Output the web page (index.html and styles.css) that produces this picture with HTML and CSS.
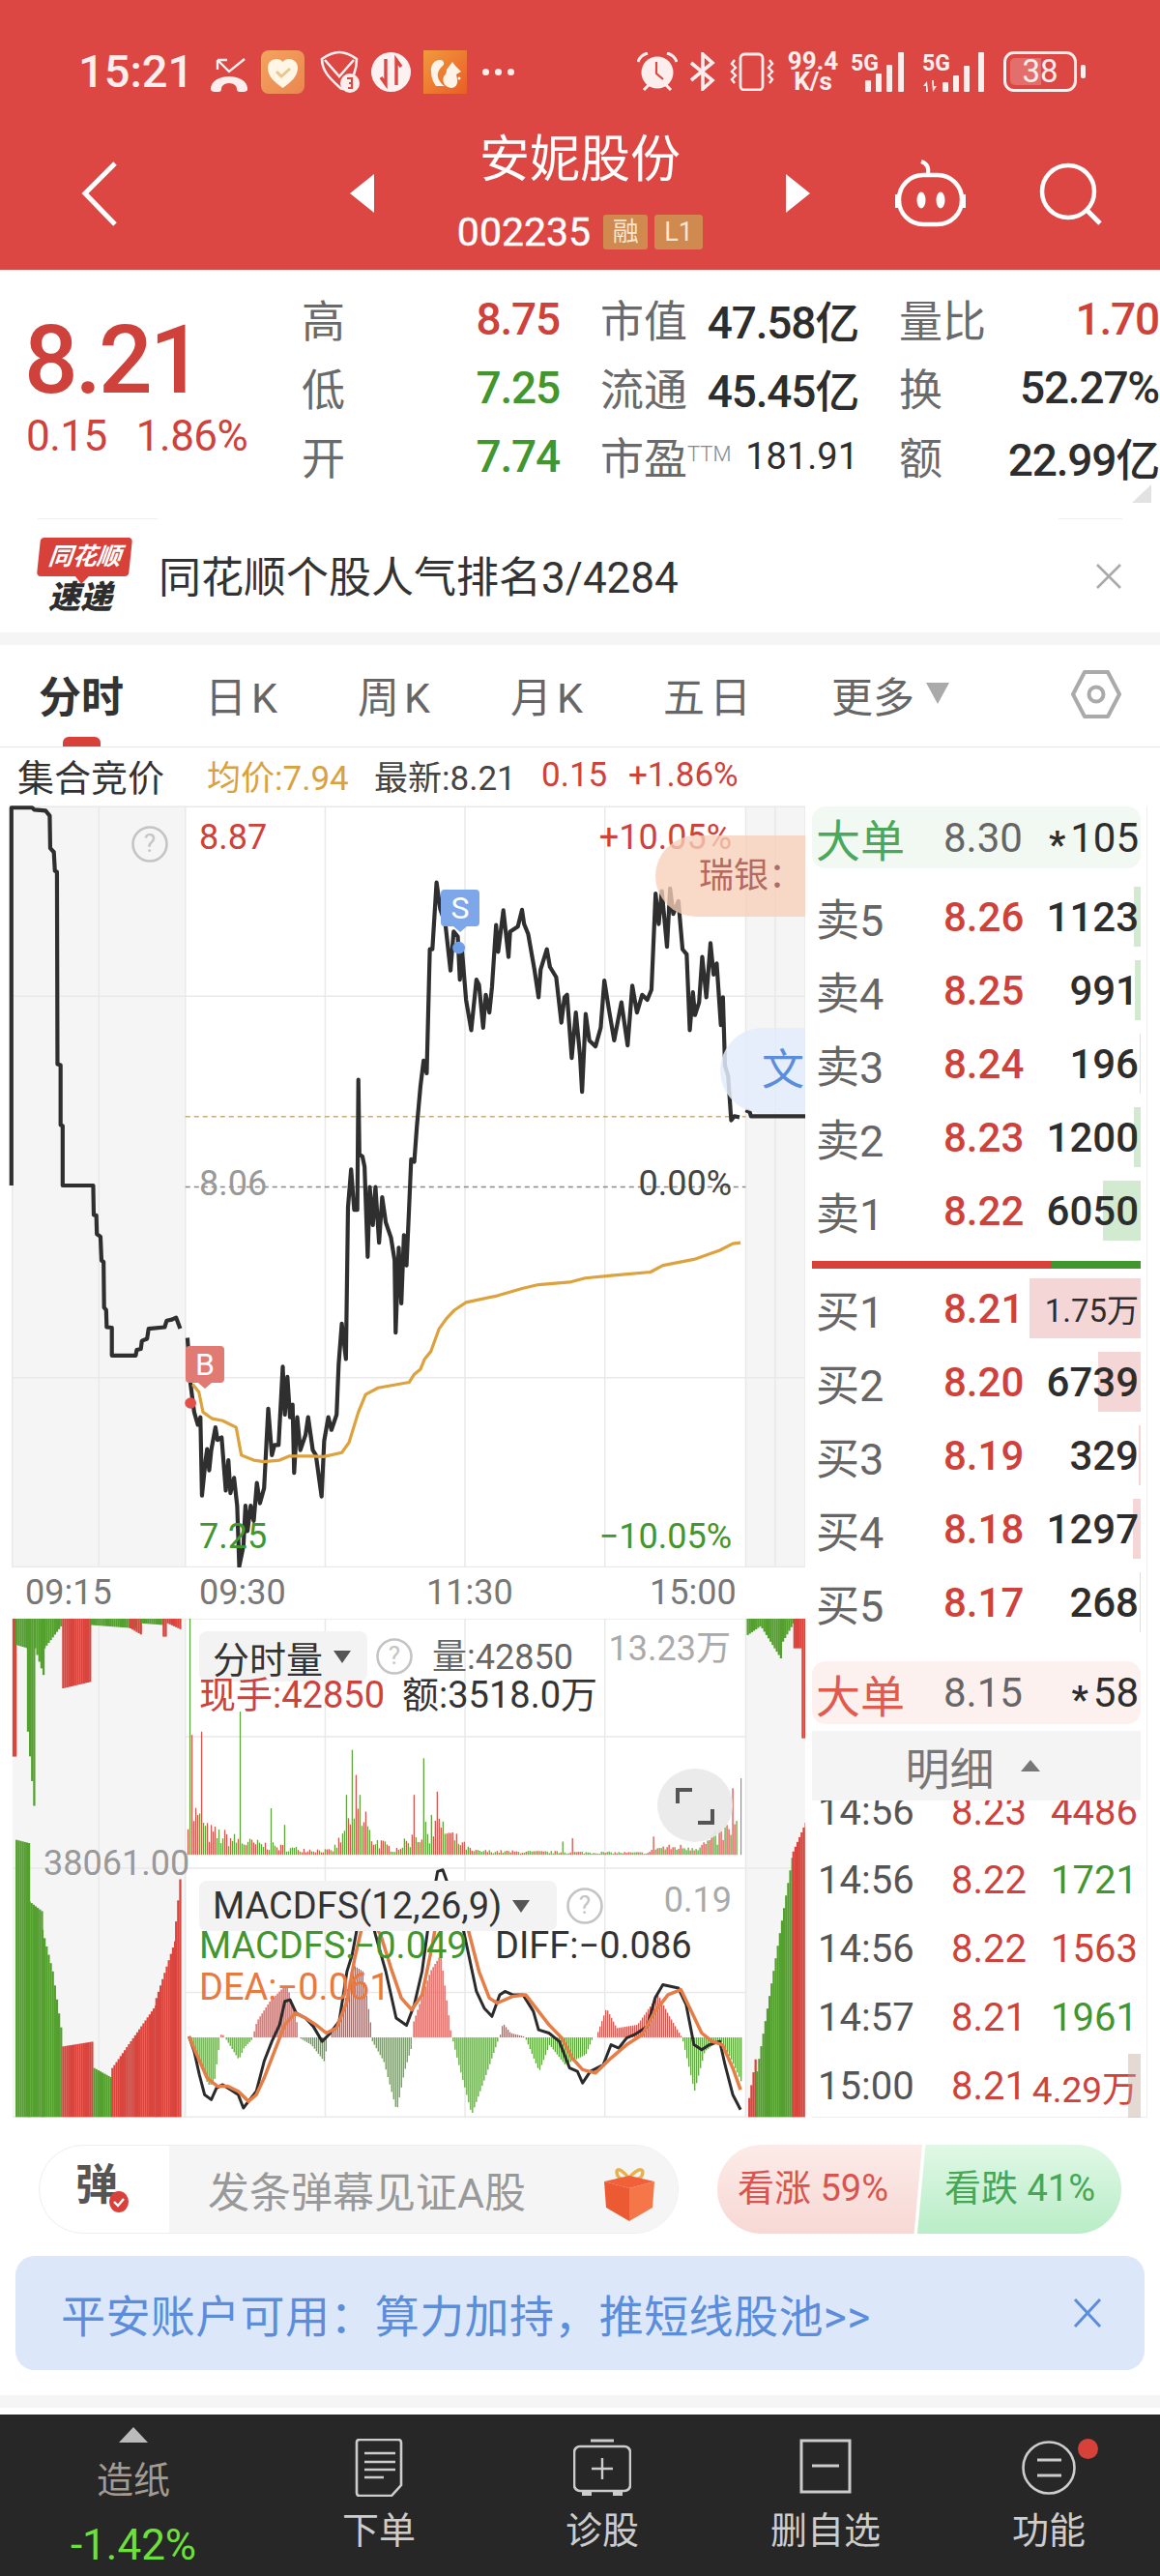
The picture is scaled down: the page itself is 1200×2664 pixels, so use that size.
FILE: index.html
```html
<!DOCTYPE html>
<html lang="zh-CN">
<head>
    <meta charset="UTF-8">
    <meta name="viewport" content="width=device-width, initial-scale=1.0">
    <title>安妮股份</title>
    <link rel="stylesheet" href="styles.css">
</head>
<body>
    <header class="header">
        <div class="status">
            <span class="clock">15:21</span>
            <svg class="st-call" viewBox="0 0 40 40"><path d="M8 5l0 10 M8 5l10 0 M8 5L20 17 36 4" fill="none" stroke="#fdeeee" stroke-width="2.4"/><path d="M1 35c0-8 9-13 19-13s19 5 19 13c0 2-2 3-4 3h-4c-2 0-3-1-3-3 0-3-3-6-8-6s-8 3-8 6c0 2-1 3-3 3H5c-2 0-4-1-4-3z" fill="#fdeeee"/></svg>
            <svg class="st-tile" viewBox="0 0 45 45"><defs><linearGradient id="tileA" x1="0" y1="0" x2="1" y2="1"><stop offset="0" stop-color="#f4a35f"/><stop offset="1" stop-color="#ea8650"/></linearGradient></defs><rect width="45" height="45" rx="8" fill="url(#tileA)"/><path d="M22.500 39C14 33 7 27 7 18c0-6 5-9 9-9 3 0 5 1 6.500 3 1.500-2 3.500-3 6.500-3 4 0 9 3 9 9 0 9-7 15-15.500 21z" fill="#fff6e6"/><path d="M16 22l5 5 9-8" fill="none" stroke="#eac68c" stroke-width="3"/></svg>
            <svg class="st-shield" viewBox="0 0 42 46"><path d="M3 10C10 5 16 3 21 3s11 2 18 7c0 10-3 20-11 29-2 2-5 3-7 0C11 30 3 22 3 10z" fill="none" stroke="#fdeeee" stroke-width="2.600"/><path d="M6 11l15 17L36 11" fill="none" stroke="#fdeeee" stroke-width="2.600"/><circle cx="32" cy="35" r="10" fill="#fdeeee"/><path d="M29 30h5v10h-4 M31 35h3" fill="none" stroke="#dc4743" stroke-width="2.200"/></svg>
            <svg class="st-circle" viewBox="0 0 41 41"><circle cx="20.500" cy="20.500" r="20.500" fill="#fdf1f2"/><path d="M15 7v26l-5-7 M26 34V8l5 7" fill="none" stroke="#dc4743" stroke-width="3.400"/></svg>
            <svg class="st-tile st-uc" viewBox="0 0 45 45"><defs><linearGradient id="tileB" x1="0" y1="0" x2="1" y2="1"><stop offset="0" stop-color="#f19a3e"/><stop offset="1" stop-color="#e95d26"/></linearGradient></defs><rect width="45" height="45" fill="url(#tileB)"/><path d="M8 22c-1-7 4-13 10-12 4 1 4 5 1 7-4 4-6 9-2 15 2 3 3 4 5 5H13c-3-4-5-9-5-15z" fill="#fdf3e6"/><path d="M24 20l6-8 3 4 6 6-5 3 1 5c1 5-2 9-6 9-7-1-10-6-8-12 2-2 3-4 3-7z" fill="#fdf3e6"/><circle cx="37" cy="29" r="1.500" fill="#fdf3e6"/></svg>
            <span class="st-more"><i></i><i></i><i></i></span>
            <span class="status-gap"></span>
            <svg class="st-alarm" viewBox="0 0 42 40"><circle cx="21" cy="21" r="16.500" fill="#fdeeee"/><path d="M1 10C3 4 7 2 11 1 M41 10C39 4 35 2 31 1" fill="none" stroke="#fdeeee" stroke-width="3"/><path d="M7 39l5-5 M35 39l-5-5" stroke="#fdeeee" stroke-width="3"/><path d="M20 10v12l7 6" fill="none" stroke="#dc4743" stroke-width="2.200"/></svg>
            <svg class="st-bt" viewBox="0 0 28 40"><path d="M2 11l22 18-10 9V2l10 9L2 29" fill="none" stroke="#fdeeee" stroke-width="3.600"/></svg>
            <svg class="st-vib" viewBox="0 0 46 40"><rect x="11" y="2" width="23" height="37" rx="4" fill="none" stroke="#fdeeee" stroke-width="2.800"/><path d="M5 8l-3 4 4 4-4 4 4 4-4 4 3 4 M41 8l3 4-4 4 4 4-4 4 4 4-3 4" fill="none" stroke="#fdeeee" stroke-width="2.400"/></svg>
            <span class="st-speed"><b>99.4</b><b>K/s</b></span>
            <svg class="st-sig" viewBox="0 0 63 41"><text x="0" y="19" class="sig-text">5G</text><rect x="15" y="29" width="6" height="12" rx="1"/><rect x="26" y="22" width="6" height="19" rx="1"/><rect x="37" y="13" width="6" height="28" rx="1"/><rect x="49" y="0" width="6" height="41" rx="1"/></svg>
            <svg class="st-sig st-sig2" viewBox="0 0 68 41"><text x="0" y="19" class="sig-text">5G</text><path d="M5 30l-4 5h3v6h2z M11 41l4-6h-3v-6h-2z"/><rect x="21" y="31" width="6" height="10" rx="1"/><rect x="32" y="24" width="6" height="17" rx="1"/><rect x="43" y="14" width="6" height="27" rx="1"/><rect x="58" y="0" width="6" height="41" rx="1"/></svg>
            <div class="battery"><span class="battery-fill"></span><span class="battery-num">38</span></div>
            <span class="battery-nub"></span>
        </div>
        <nav class="nav">
            <svg class="nav-back" viewBox="0 0 39 69"><path d="M36 3L5 34l31 32" fill="none" stroke="#fff" stroke-width="5"/></svg>
            <span class="tri-left"></span>
            <div class="nav-title">
                <div class="stock-name">安妮股份</div>
                <div class="stock-code">002235<span class="tag">融</span><span class="tag tag-l1">L1</span></div>
            </div>
            <span class="tri-right"></span>
            <svg class="nav-robot" viewBox="0 0 75 70"><path d="M28 2c6 2 8 7 7 13" fill="none" stroke="#fff" stroke-width="4"/><rect x="5" y="16" width="65" height="51" rx="25" fill="none" stroke="#fff" stroke-width="4.500"/><path d="M4 36v14 M71 36v14" stroke="#fff" stroke-width="6"/><ellipse cx="28" cy="42" rx="4.500" ry="8.500" fill="#fff"/><ellipse cx="48" cy="42" rx="4.500" ry="8.500" fill="#fff"/></svg>
            <svg class="nav-search" viewBox="0 0 65 65"><circle cx="30" cy="30" r="27" fill="none" stroke="#fff" stroke-width="4.500"/><path d="M50 50l13 13" stroke="#fff" stroke-width="5"/></svg>
        </nav>
    </header>

    <section class="quote">
        <div class="price-box">
            <div class="price-big">8.21</div>
            <div class="price-sub"><span>0.15</span><span>1.86%</span></div>
        </div>
        <div class="stats">
            <div class="stat"><span class="stat-k">高</span><span class="val up">8.75</span></div>
            <div class="stat"><span class="stat-k">市值</span><span class="val">47.58亿</span></div>
            <div class="stat"><span class="stat-k">量比</span><span class="val up">1.70</span></div>
            <div class="stat"><span class="stat-k">低</span><span class="val down">7.25</span></div>
            <div class="stat"><span class="stat-k">流通</span><span class="val">45.45亿</span></div>
            <div class="stat"><span class="stat-k">换</span><span class="val">52.27%</span></div>
            <div class="stat"><span class="stat-k">开</span><span class="val down">7.74</span></div>
            <div class="stat"><span class="stat-k">市盈<sup class="ttm">TTM</sup></span><span class="val val-sm">181.91</span></div>
            <div class="stat"><span class="stat-k">额</span><span class="val">22.99亿</span></div>
        </div>
        <span class="corner"></span>
    </section>

    <section class="news">
        <div class="news-rule"><span></span><span></span></div>
        <div class="news-row">
            <div class="logo">
                <div class="logo-tag">同花顺</div>
                <div class="logo-sub">速递</div>
            </div>
            <div class="news-text">同花顺个股人气排名3/4284</div>
            <svg class="news-close" viewBox="0 0 28 28"><path d="M2 2l24 24 M26 2L2 26" stroke="#aaa" stroke-width="2.600"/></svg>
        </div>
    </section>

    <div class="band"></div>

    <div class="tabs">
        <span class="tab active">分时</span>
        <span class="tab">日K</span>
        <span class="tab">周K</span>
        <span class="tab">月K</span>
        <span class="tab">五日</span>
        <span class="tab tab-more">更多<i class="tri-more"></i></span>
        <svg class="tab-hex" viewBox="0 0 52 52"><path d="M14 3h24l12 23-12 23H14L2 26z" fill="none" stroke="#aaa" stroke-width="4" stroke-linejoin="round"/><circle cx="26" cy="26" r="7.500" fill="none" stroke="#aaa" stroke-width="4"/></svg>
    </div>

    <div class="subhead">
        <span class="sub-title">集合竞价</span>
        <span class="sub-avg">均价:7.94</span>
        <span class="sub-last">最新:8.21</span>
        <span class="sub-chg">0.15</span>
        <span class="sub-pct">+1.86%</span>
    </div>

    <main class="market">
        <div class="chart-col">
            <div class="plot plot-main">
                <svg class="plot-svg" viewBox="0 0 1568 1512" preserveAspectRatio="none">
                    <rect x="24" y="8" width="334" height="1504" fill="#f5f5f5"/>
                    <rect x="1440" y="8" width="115" height="1504" fill="#f5f5f5"/>
                    <g class="grid">
                        <path d="M24 8H1555 M24 383H1555 M24 1137H1555 M24 1511H1555 M24 8V1512 M1555 8V1512 M191 8V1512 M358 8V1512 M628 8V1512 M898 8V1512 M1168 8V1512 M1440 8V1512 M1497 8V1512"/>
                    </g>
                    <path class="dash dash-tan" d="M358 621H1440"/>
                    <path class="dash" d="M358 760H1440"/>
                    <polyline class="line line-price" points="22,757 22,10 62,10 66,14 88,16 96,26 97,90 104,98 106,135 110,137 111,517 117,519 117,637 121,639 121,757 180,757 181,815 186,816 187,853 194,858 196,905 200,908 201,998 205,1003 206,1037 216,1038 216,1093 262,1093 264,1082 272,1080 274,1064 284,1060 287,1040 318,1037 322,1024 332,1022 340,1018 348,1040"/>
                    <polyline class="line line-price" points="362,1058 368,1150 375,1205 382,1230 387,1215 390,1370 397,1300 400,1278 404,1320 408,1280 416,1235 420,1260 428,1255 436,1360 441,1300 445,1365 452,1335 458,1390 462,1510 470,1470 474,1390 478,1440 484,1390 490,1420 496,1345 502,1385 510,1355 518,1198 525,1290 530,1270 538,1270 546,1115 550,1210 555,1135 560,1215 565,1190 568,1325 574,1215 580,1280 590,1250 595,1215 604,1280 610,1290 614,1320 621,1372 626,1262 634,1215 640,1240 650,1210 654,1110 660,1030 668,1100 672,800 678,725 684,805 690,805 692,548 694,695 700,700 704,720 710,898 714,760 720,835 725,760 732,870 738,780 745,830 755,860 762,905 764,1048 770,880 775,990 780,855 785,915 790,800 794,705 800,710 805,640 812,560 818,510 824,535 830,290 835,290 843,158 850,210 860,240 870,332 876,255 884,265 888,350 892,290 900,390 910,450 920,350 925,360 933,445 938,380 945,415 950,365 958,242 962,295 972,213 982,305 985,255 1000,245 1008,212 1012,240 1020,260 1032,330 1040,385 1044,330 1056,290 1062,325 1074,345 1084,435 1090,385 1095,380 1104,505 1112,415 1120,500 1124,572 1131,418 1138,470 1150,482 1160,445 1167,352 1176,410 1186,470 1200,395 1212,480 1221,362 1230,415 1240,380 1250,390 1258,370 1266,180 1272,240 1278,175 1288,285 1294,170 1300,220 1310,195 1318,290 1326,300 1332,450 1338,375 1342,420 1350,395 1356,305 1364,385 1372,278 1378,340 1384,318 1392,440 1396,385 1400,520 1406,540 1412,628 1418,620 1428,622"/>
                    <polyline class="line line-price" points="1440,608 1448,612 1450,620 1555,620"/>
                    <polyline class="line line-avg" points="372,1150 384,1165 392,1205 410,1218 430,1222 456,1235 466,1290 490,1300 510,1303 540,1300 558,1292 600,1292 625,1293 660,1285 674,1265 692,1205 706,1170 730,1157 790,1146 800,1130 812,1120 820,1100 832,1085 848,1040 862,1020 878,1003 900,988 960,975 1010,960 1040,953 1100,948 1130,940 1180,935 1256,928 1280,915 1340,903 1390,885 1415,872 1430,870"/>
                    <circle cx="368" cy="1187" r="11" fill="#e0514c"/>
                    <circle cx="886" cy="287" r="12" fill="#6f9fe6"/>
                </svg>
                <svg class="q-mark q-main" viewBox="0 0 38 38"><circle cx="19" cy="19" r="17.500" fill="none" stroke="#c4c4c4" stroke-width="2.600"/><text x="19" y="27" class="q-text">?</text></svg>
                <span class="lbl lbl-high up">8.87</span>
                <span class="lbl lbl-rhigh up">+10.05%</span>
                <span class="lbl lbl-mid">8.06</span>
                <span class="lbl lbl-rmid">0.00%</span>
                <span class="lbl lbl-low down">7.25</span>
                <span class="lbl lbl-rlow down">−10.05%</span>
                <span class="flag flag-b">B</span>
                <span class="flag flag-s">S</span>
                <span class="bubble bubble-ubs">瑞银：</span>
                <span class="bubble bubble-wen">文</span>
            </div>
            <div class="axis">
                <span>09:15</span><span>09:30</span><span>11:30</span><span>15:00</span>
            </div>
            <div class="plot plot-lower">
                <svg class="plot-svg" viewBox="0 41 1568 1498" preserveAspectRatio="none">
                    <rect x="24" y="41" width="334" height="1498" fill="#f5f5f5"/>
                    <rect x="1440" y="41" width="115" height="1498" fill="#f5f5f5"/>
                    <g class="grid">
                        <path d="M24 41H1555 M358 395H1440 M24 790H1555 M358 1163H1440 M24 1537H1555 M191 41V1537 M358 41V1537 M628 41V1537 M898 41V1537 M1168 41V1537 M1440 41V1537"/>
                    </g>
                    <g id="auction"></g>
                    <g id="volume"></g>
                    <g id="macd"></g>
                    <polyline class="line line-diff" points="365,1295 375,1340 385,1410 395,1470 408,1485 418,1450 430,1440 445,1455 460,1470 470,1510 480,1490 495,1460 510,1370 525,1310 540,1260 550,1190 560,1185 572,1225 590,1240 605,1265 622,1310 635,1290 655,1250 670,1100 680,1050 692,950 712,910 725,990 745,1100 765,1240 785,1262 800,1200 815,1100 830,930 845,800 855,795 870,860 890,940 905,1050 920,1160 935,1210 950,1235 965,1170 975,1160 990,1170 1010,1170 1030,1220 1040,1275 1060,1285 1080,1310 1100,1390 1115,1400 1125,1435 1140,1400 1165,1380 1180,1320 1195,1330 1210,1300 1225,1290 1250,1265 1265,1180 1280,1140 1295,1145 1310,1150 1325,1200 1340,1320 1355,1335 1370,1320 1390,1310 1400,1380 1415,1470 1430,1515"/>
                    <polyline class="line line-dea" points="365,1295 380,1350 400,1420 420,1445 440,1445 460,1460 480,1490 495,1470 510,1420 530,1340 550,1260 570,1225 590,1240 610,1260 630,1285 650,1270 670,1190 685,1060 700,960 715,940 735,990 755,1090 775,1180 795,1215 815,1170 835,1020 850,880 870,855 890,890 905,980 925,1100 945,1180 960,1195 990,1175 1015,1170 1035,1210 1060,1260 1085,1300 1105,1360 1125,1395 1150,1405 1180,1360 1210,1320 1240,1290 1265,1220 1290,1170 1315,1155 1335,1220 1355,1285 1375,1310 1395,1320 1415,1390 1430,1455"/>
                </svg>
                <span class="lbl lbl-auction">38061.00</span>
                <span class="pill pill-vol">分时量<i class="tri-down"></i></span>
                <svg class="q-mark q-vol" viewBox="0 0 38 38"><circle cx="19" cy="19" r="17.500" fill="none" stroke="#c4c4c4" stroke-width="2.600"/><text x="19" y="27" class="q-text">?</text></svg>
                <span class="lbl lbl-volnow">量:42850</span>
                <span class="lbl lbl-volmax">13.23万</span>
                <span class="lbl lbl-hand up">现手:42850</span>
                <span class="lbl lbl-amount">额:3518.0万</span>
                <span class="expand"><svg viewBox="0 0 40 40"><path d="M2 17V3h15 M38 23v14H23" fill="none" stroke="#555" stroke-width="4"/></svg></span>
                <span class="pill pill-macd">MACDFS(12,26,9)<i class="tri-down"></i></span>
                <svg class="q-mark q-macd" viewBox="0 0 38 38"><circle cx="19" cy="19" r="17.500" fill="none" stroke="#c4c4c4" stroke-width="2.600"/><text x="19" y="27" class="q-text">?</text></svg>
                <span class="lbl lbl-macdmax">0.19</span>
                <span class="lbl lbl-macd down">MACDFS:−0.049</span>
                <span class="lbl lbl-diff">DIFF:−0.086</span>
                <span class="lbl lbl-dea">DEA:−0.061</span>
            </div>
        </div>

        <aside class="depth">
            <div class="big-row big-buy"><span class="big-k">大单</span><span class="big-p">8.30</span><span class="big-v"><i>*</i>105</span></div>
            <div class="levels">
                <div class="level"><span class="level-k">卖5</span><span class="level-p">8.26</span><span class="level-v">1123</span><span class="bar bar-sell" style="width:7px"></span></div>
                <div class="level"><span class="level-k">卖4</span><span class="level-p">8.25</span><span class="level-v">991</span><span class="bar bar-sell" style="width:6px"></span></div>
                <div class="level"><span class="level-k">卖3</span><span class="level-p">8.24</span><span class="level-v">196</span><span class="bar bar-sell" style="width:1px"></span></div>
                <div class="level"><span class="level-k">卖2</span><span class="level-p">8.23</span><span class="level-v">1200</span><span class="bar bar-sell" style="width:7px"></span></div>
                <div class="level"><span class="level-k">卖1</span><span class="level-p">8.22</span><span class="level-v">6050</span><span class="bar bar-sell" style="width:39px"></span></div>
            </div>
            <div class="ratio"><span class="ratio-red" style="width:73%"></span><span class="ratio-green"></span></div>
            <div class="levels levels-buy">
                <div class="level"><span class="level-k">买1</span><span class="level-p">8.21</span><span class="level-v level-wan">1.75万</span><span class="bar bar-buy" style="width:115px"></span></div>
                <div class="level"><span class="level-k">买2</span><span class="level-p">8.20</span><span class="level-v">6739</span><span class="bar bar-buy" style="width:44px"></span></div>
                <div class="level"><span class="level-k">买3</span><span class="level-p">8.19</span><span class="level-v">329</span><span class="bar bar-buy" style="width:2px"></span></div>
                <div class="level"><span class="level-k">买4</span><span class="level-p">8.18</span><span class="level-v">1297</span><span class="bar bar-buy" style="width:8px"></span></div>
                <div class="level"><span class="level-k">买5</span><span class="level-p">8.17</span><span class="level-v">268</span><span class="bar bar-buy" style="width:1px"></span></div>
            </div>
            <div class="big-row big-sell"><span class="big-k">大单</span><span class="big-p">8.15</span><span class="big-v"><i>*</i>58</span></div>
            <div class="detail-head">明细<i class="tri-up"></i></div>
            <div class="ticks">
                <div class="tick tick-first"><span class="tick-t">14:56</span><span class="tick-p">8.23</span><span class="tick-v up">4486</span></div>
                <div class="tick"><span class="tick-t">14:56</span><span class="tick-p">8.22</span><span class="tick-v down">1721</span></div>
                <div class="tick"><span class="tick-t">14:56</span><span class="tick-p">8.22</span><span class="tick-v up">1563</span></div>
                <div class="tick"><span class="tick-t">14:57</span><span class="tick-p">8.21</span><span class="tick-v down">1961</span></div>
                <div class="tick"><span class="tick-t">15:00</span><span class="tick-p">8.21</span><span class="tick-v tick-wan up">4.29万</span><span class="tick-bar"></span></div>
            </div>
        </aside>
    </main>

    <div class="actions">
        <div class="danmu">
            <div class="danmu-icon">弹<svg class="danmu-check" viewBox="0 0 20 22"><ellipse cx="10" cy="11" rx="10" ry="11" fill="#d9403a"/><path d="M5 11l4 4 6-7" fill="none" stroke="#fff" stroke-width="2.400"/></svg></div>
            <div class="danmu-input">
                <span>发条弹幕见证A股</span>
                <svg class="gift" viewBox="0 0 54 58"><path d="M26 13C16 1 12 4 15 11c2 4 7 4 12 3 5 1 11 1 13-3 3-7-2-10-13 2" fill="none" stroke="#e9b247" stroke-width="3.500"/><path d="M1 17l26-6 26 6-26 7z" fill="#f2603a"/><path d="M1 17l26 7v34L3 44z" fill="#ec5a33"/><path d="M53 17L27 24v34l24-14z" fill="#f47649"/></svg>
            </div>
        </div>
        <div class="vote">
            <div class="vote-up">看涨 59%</div>
            <div class="vote-down">看跌 41%</div>
        </div>
    </div>

    <div class="banner">
        <span>平安账户可用：算力加持，推短线股池&gt;&gt;</span>
        <svg class="banner-close" viewBox="0 0 30 32"><path d="M2 2l26 28 M28 2L2 30" stroke="#5b8ddb" stroke-width="3"/></svg>
    </div>

    <div class="band band-bottom"></div>

    <footer class="footer">
        <div class="foot-item foot-stock">
            <i class="tri-foot"></i>
            <span class="foot-sector">造纸</span>
            <span class="foot-chg">-1.42%</span>
        </div>
        <div class="foot-item">
            <svg class="foot-icon" viewBox="0 0 60 60"><path d="M10 1h40c2 0 3 1 3 3v44l-10 11H10c-2 0-3-1-3-3V4c0-2 1-3 3-3z" fill="none" stroke="#ccc" stroke-width="2.600"/><path d="M15 15h32 M15 24h32 M15 32h32 M15 40h20" stroke="#ccc" stroke-width="2.600"/></svg>
            <span>下单</span>
        </div>
        <div class="foot-item">
            <svg class="foot-icon" viewBox="0 0 60 60"><path d="M18 2h24" stroke="#ccc" stroke-width="3"/><rect x="1" y="8" width="58" height="46" rx="6" fill="none" stroke="#ccc" stroke-width="2.600"/><path d="M30 20v22 M19 31h22" stroke="#ccc" stroke-width="2.400"/><path d="M9 54h10v5H9z M41 54h10v5H41z" fill="#ccc"/></svg>
            <span>诊股</span>
        </div>
        <div class="foot-item">
            <svg class="foot-icon" viewBox="0 0 60 60"><rect x="5" y="2" width="50" height="53" fill="none" stroke="#ccc" stroke-width="3"/><path d="M16 28h28" stroke="#ccc" stroke-width="3"/></svg>
            <span>删自选</span>
        </div>
        <div class="foot-item foot-fn">
            <svg class="foot-icon" viewBox="0 0 60 60"><circle cx="30" cy="30" r="26.500" fill="none" stroke="#ccc" stroke-width="2.600"/><path d="M18 22h25 M18 38h25" stroke="#ccc" stroke-width="2.800"/></svg>
            <span>功能</span>
            <i class="foot-dot"></i>
        </div>
    </footer>

    <script src="charts.js"></script>
</body>
</html>
```

FILE: styles.css
```css
* {
    box-sizing: border-box;
}
body {
    margin: 0;
    width: 1200px;
    height: 2664px;
    overflow: hidden;
    background-color: #fff;
    font-family: Roboto, "Noto Sans CJK SC", sans-serif;
    color: #333;
}
i {
    font-style: normal;
}
.up { color: #cf413b; }
.down { color: #42962e; }

/* header */
.header {
    height: 279px;
    padding-top: 51px;
    background-color: #dc4743;
    color: #fff;
}
.status {
    display: flex;
    align-items: center;
    height: 46px;
    padding-left: 81px;
}
.clock {
    width: 136px;
    font-size: 47px;
    font-weight: 500;
    color: #fdeeee;
    line-height: 46px;
}
.st-call { width: 40px; height: 40px; margin-top: 6px; margin-right: 13px; }
.st-tile { width: 45px; height: 45px; }
.st-shield { width: 42px; height: 46px; margin-left: 15px; }
.st-circle { width: 41px; height: 41px; margin-left: 12px; }
.st-uc { margin-left: 13px; }
.st-more {
    display: flex;
    gap: 6px;
    margin-left: 16px;
}
.st-more i {
    width: 7px;
    height: 7px;
    border-radius: 50%;
    background-color: #fdeeee;
}
.status-gap { width: 127px; }
.st-alarm { width: 42px; height: 40px; }
.st-bt { width: 28px; height: 40px; margin-left: 12px; }
.st-vib { width: 46px; height: 40px; margin-left: 14px; }
.st-speed {
    display: flex;
    flex-direction: column;
    align-items: center;
    width: 56px;
    margin-left: 12px;
    font-size: 26px;
    line-height: 21px;
    color: #fdeeee;
}
.st-speed b { font-weight: 700; }
.st-sig {
    width: 63px;
    height: 41px;
    margin-left: 11px;
    fill: #fdeeee;
    overflow: visible;
}
.st-sig2 { width: 68px; margin-left: 11px; }
.sig-text {
    font-size: 23px;
    font-weight: 700;
    fill: #fdeeee;
}
.battery {
    position: relative;
    width: 76px;
    height: 42px;
    margin-left: 16px;
    padding: 4px;
    border: 3px solid #fdeeee;
    border-radius: 11px;
}
.battery-fill {
    display: block;
    width: 52%;
    height: 100%;
    border-radius: 5px 0 0 5px;
    background-color: rgba(255, 255, 255, 0.22);
}
.battery-num {
    position: absolute;
    top: 0;
    left: 0;
    right: 0;
    text-align: center;
    font-size: 33px;
    line-height: 36px;
    color: #fdeeee;
}
.battery-nub {
    width: 5px;
    height: 14px;
    margin-left: 4px;
    border-radius: 2px;
    background-color: #fdeeee;
}
.nav {
    display: flex;
    align-items: center;
    height: 182px;
    padding: 24px 0 0 83px;
}
.nav-back { width: 39px; height: 69px; margin-right: 240px; }
.tri-left, .tri-right {
    width: 0;
    height: 0;
    border-top: 20px solid transparent;
    border-bottom: 20px solid transparent;
}
.tri-left { border-right: 25px solid #fff; }
.tri-right { border-left: 25px solid #fff; }
.nav-title {
    width: 426px;
    text-align: center;
}
.stock-name {
    font-size: 52px;
    line-height: 56px;
    color: #fff;
    margin-top: -4px;
}
.stock-code {
    display: flex;
    justify-content: center;
    align-items: center;
    height: 36px;
    margin-top: 28px;
    font-size: 41px;
    color: #fff;
    -webkit-text-stroke: 0.4px #fff;
}
.tag {
    width: 46px;
    height: 36px;
    margin-left: 13px;
    border-radius: 3px;
    background-color: #d0894f;
    color: #fae6cf;
    font-size: 27px;
    line-height: 36px;
    text-align: center;
    -webkit-text-stroke: 0;
}
.tag-l1 {
    width: 50px;
    margin-left: 7px;
}
.nav-robot { width: 75px; height: 70px; margin-left: 87px; }
.nav-search { width: 65px; height: 65px; margin-left: 75px; }

/* quote */
.quote {
    position: relative;
    display: flex;
    height: 257px;
    padding-top: 15px;
}
.price-box {
    width: 312px;
    padding-left: 25px;
    color: #cf413b;
}
.price-big {
    height: 106px;
    margin-top: 26px;
    font-size: 98px;
    font-weight: 500;
    line-height: 106px;
    letter-spacing: -3px;
}
.price-sub {
    display: flex;
    gap: 30px;
    margin-top: 0;
    padding-left: 2px;
    font-size: 44px;
    line-height: 50px;
    letter-spacing: -0.5px;
}
.stats {
    display: grid;
    grid-template-columns: 267px 267px 269px;
    grid-auto-rows: 71px;
    column-gap: 42px;
    width: 888px;
}
.stat {
    display: flex;
    justify-content: space-between;
    align-items: center;
}
.stat-k {
    font-size: 45px;
    color: #6a6a6a;
}
.ttm {
    font-size: 22px;
    font-weight: 300;
    vertical-align: 14px;
    line-height: 0;
    color: #888;
}
.val {
    font-size: 46px;
    font-weight: 500;
    letter-spacing: -1.2px;
    color: #2d2d2d;
    white-space: nowrap;
}
.val.up { color: #cf413b; }
.val.down { color: #42962e; }
.val-sm {
    font-size: 38px;
    font-weight: 400;
    letter-spacing: 0;
}
.corner {
    position: absolute;
    right: 9px;
    top: 222px;
    width: 0;
    height: 0;
    border-left: 20px solid transparent;
    border-bottom: 19px solid #e2e2e2;
}

/* news */
.news {
    height: 118px;
}
.news-rule {
    display: flex;
    justify-content: space-between;
    height: 1px;
    padding: 0 39px;
}
.news-rule span {
    width: 124px;
    background-color: #eee;
}
.news-rule span:last-child { width: 66px; }
.news-row {
    display: flex;
    align-items: center;
    height: 117px;
    padding-left: 40px;
}
.logo {
    width: 98px;
}
.logo-tag {
    position: relative;
    width: 95px;
    height: 40px;
    border-radius: 4px;
    background-color: #d8403a;
    color: #fff;
    font-size: 25px;
    font-weight: 700;
    font-style: italic;
    line-height: 40px;
    text-align: center;
    transform: skewX(-6deg);
}
.logo-tag::after {
    content: "";
    position: absolute;
    left: 40px;
    bottom: -8px;
    border-top: 8px solid #d8403a;
    border-left: 7px solid transparent;
    border-right: 7px solid transparent;
}
.logo-sub {
    margin-top: 5px;
    padding-left: 10px;
    font-size: 33px;
    font-weight: 900;
    font-style: italic;
    line-height: 34px;
    color: #2d2d2d;
}
.news-text {
    margin-left: 26px;
    margin-top: -4px;
    font-size: 44px;
    color: #333;
    flex: 1;
}
.news-close {
    width: 28px;
    height: 28px;
    margin-right: 39px;
}
.band {
    height: 13px;
    background-color: #f5f5f5;
}

/* tabs */
.tabs {
    position: relative;
    display: flex;
    align-items: center;
    gap: 78px;
    height: 106px;
    padding: 0 40px 4px 40px;
    border-bottom: 1px solid #e6e6e6;
}
.tab {
    font-size: 43px;
    color: #666;
    letter-spacing: 5px;
    white-space: nowrap;
}
.tab.active {
    margin-right: 6px;
    font-size: 44px;
    font-weight: 700;
    color: #333;
    letter-spacing: 0;
}
.tab.active::after {
    content: "";
    position: absolute;
    left: 65px;
    bottom: 0;
    width: 39px;
    height: 10px;
    border-radius: 6px 6px 0 0;
    background-color: #d8403a;
}
.tab-more {
    display: flex;
    align-items: center;
    letter-spacing: 0;
}
.tri-more {
    width: 0;
    height: 0;
    margin-left: 12px;
    margin-top: -2px;
    border-top: 22px solid #aaa;
    border-left: 12px solid transparent;
    border-right: 12px solid transparent;
}
.tab-hex {
    width: 52px;
    height: 52px;
    margin-left: auto;
}

/* strip above the chart */
.subhead {
    display: flex;
    align-items: center;
    height: 57px;
    padding-left: 18px;
    font-size: 35px;
    white-space: nowrap;
}
.sub-title {
    width: 196px;
    font-size: 38px;
    color: #333;
}
.sub-avg { width: 173px; color: #d9a23e; }
.sub-last { width: 173px; color: #444; }
.sub-chg { width: 90px; color: #cf413b; }
.sub-pct { color: #cf413b; }

/* chart + order book */
.market {
    display: flex;
    height: 1360px;
    padding-top: 4px;
}
.chart-col {
    width: 840px;
    margin-top: -4px;
}
.plot {
    position: relative;
    width: 833px;
    overflow: hidden;
}
.plot-main { height: 791px; }
.plot-lower { height: 516px; }
.plot-svg {
    display: block;
    width: 840px;
    height: 100%;
}
.grid path {
    fill: none;
    stroke: #e9e9e9;
    stroke-width: 1.500;
    vector-effect: non-scaling-stroke;
}
.dash {
    fill: none;
    stroke: #888;
    stroke-width: 1.500;
    stroke-dasharray: 5 4;
    vector-effect: non-scaling-stroke;
}
.dash-tan { stroke: #c9ab7d; }
.line {
    fill: none;
    vector-effect: non-scaling-stroke;
    stroke-linejoin: round;
}
.line-price { stroke: #2f2f2f; stroke-width: 4.200; }
.line-avg { stroke: #dda23d; stroke-width: 3.200; }
.line-diff { stroke: #2b2b2b; stroke-width: 3; }
.line-dea { stroke: #e67c46; stroke-width: 3.500; }

.lbl {
    position: absolute;
    font-size: 36px;
    line-height: 40px;
    white-space: nowrap;
}
.lbl-high { left: 206px; top: 16px; }
.lbl-rhigh { right: 76px; top: 16px; }
.lbl-mid { left: 206px; top: 374px; color: #999; }
.lbl-rmid { right: 76px; top: 374px; color: #444; }
.lbl-low { left: 206px; top: 739px; }
.lbl-rlow { right: 76px; top: 739px; }
.q-mark { position: absolute; width: 38px; height: 38px; }
.q-text {
    font-size: 26px;
    fill: #c4c4c4;
    text-anchor: middle;
}
.q-main { left: 136px; top: 24px; }
.flag {
    position: absolute;
    width: 40px;
    height: 38px;
    border-radius: 4px;
    color: #fff;
    font-size: 32px;
    line-height: 38px;
    text-align: center;
}
.flag::after {
    content: "";
    position: absolute;
    left: 13px;
    bottom: -6px;
    border-top: 6px solid;
    border-left: 7px solid transparent;
    border-right: 7px solid transparent;
    border-top-color: inherit;
}
.flag-b { left: 192px; top: 562px; background-color: #e07a72; border-color: #e07a72; }
.flag-s { left: 456px; top: 90px; background-color: #7da7e8; border-color: #7da7e8; }
.bubble {
    position: absolute;
    white-space: nowrap;
    font-size: 36px;
    line-height: 84px;
}
.bubble-ubs {
    left: 678px;
    top: 34px;
    width: 200px;
    height: 84px;
    padding-left: 45px;
    border-radius: 42px;
    background-color: rgba(247, 208, 186, 0.78);
    color: #b56a5f;
}
.bubble-wen {
    left: 745px;
    top: 233px;
    width: 130px;
    height: 88px;
    padding-left: 43px;
    border-radius: 44px;
    background-color: rgba(226, 236, 250, 0.85);
    color: #5b8ddb;
    font-size: 44px;
    line-height: 88px;
}
.axis {
    display: flex;
    height: 53px;
    padding: 0 0 0 26px;
    font-size: 36px;
    line-height: 52px;
    color: #777;
}
.axis span:nth-child(1) { width: 180px; }
.axis span:nth-child(2) { width: 235px; }
.axis span:nth-child(3) { width: 231px; }

.lbl-auction { left: 45px; top: 233px; color: #999; }
.pill {
    position: absolute;
    display: flex;
    align-items: center;
    height: 52px;
    padding-left: 14px;
    border-radius: 8px;
    background-color: #f3f3f3;
    font-size: 38px;
    color: #333;
    white-space: nowrap;
}
.pill-vol { left: 206px; top: 13px; width: 174px; }
.pill-macd { left: 206px; top: 271px; width: 370px; }
.tri-down {
    width: 0;
    height: 0;
    margin-left: 11px;
    border-top: 13px solid #555;
    border-left: 9px solid transparent;
    border-right: 9px solid transparent;
}
.q-vol { left: 389px; top: 20px; }
.q-macd { left: 586px; top: 278px; }
.lbl-volnow { left: 447px; top: 20px; color: #666; }
.lbl-volmax { right: 77px; top: 11px; color: #aaa; }
.lbl-hand { left: 206px; top: 59px; font-size: 38px; }
.lbl-amount { left: 416px; top: 59px; font-size: 38px; color: #333; }
.expand {
    position: absolute;
    left: 680px;
    top: 155px;
    width: 78px;
    height: 76px;
    padding: 19px;
    border-radius: 50%;
    background-color: rgba(233, 233, 233, 0.92);
}
.expand svg { display: block; width: 40px; height: 40px; }
.lbl-macdmax { right: 76px; top: 271px; color: #aaa; }
.lbl-macd { left: 206px; top: 318px; font-size: 38px; }
.lbl-diff { left: 512px; top: 318px; font-size: 38px; color: #333; }
.lbl-dea { left: 206px; top: 361px; font-size: 38px; color: #e8793f; }

/* order book */
.depth {
    width: 347px;
    height: 1356px;
    border-right: 1px solid #eee;
    border-bottom: 1px solid #eee;
    padding-right: 6px;
}
.big-row {
    display: flex;
    align-items: center;
    height: 64px;
    border-radius: 14px;
    padding-left: 4px;
}
.big-buy { background-color: #f1f9f2; }
.big-sell {
    height: 65px;
    margin-top: 23px;
    background-color: #fdf1f0;
}
.big-k {
    width: 132px;
    font-size: 46px;
    color: #4ba85a;
}
.big-sell .big-k { color: #e05a4e; }
.big-p {
    width: 85px;
    font-size: 42px;
    color: #666;
}
.big-v {
    flex: 1;
    padding-right: 2px;
    text-align: right;
    font-size: 42px;
    color: #2d2d2d;
}
.big-v i {
    position: relative;
    top: 6px;
    margin-right: 5px;
    font-size: 38px;
    font-weight: 700;
}
.levels { margin-top: 12px; }
.levels-buy { margin-top: 3px; }
.level {
    position: relative;
    display: flex;
    align-items: center;
    height: 76px;
    padding-left: 4px;
}
.level-k {
    width: 132px;
    font-size: 45px;
    color: #666;
}
.level-p {
    width: 85px;
    font-size: 42px;
    font-weight: 500;
    color: #cf413b;
}
.level-v {
    position: relative;
    z-index: 1;
    flex: 1;
    padding-right: 2px;
    text-align: right;
    font-size: 42px;
    font-weight: 500;
    color: #2d2d2d;
}
.level-wan { font-size: 33px; font-weight: 400; }
.bar {
    position: absolute;
    right: 0;
    top: 7px;
    bottom: 7px;
}
.bar-sell { background-color: #d2ead0; }
.bar-buy { background-color: #f5d6d6; }
.ratio {
    display: flex;
    height: 8px;
    margin-top: 14px;
}
.ratio-red { background-color: #d8403a; }
.ratio-green { flex: 1; background-color: #42962e; }
.detail-head {
    position: relative;
    z-index: 1;
    display: flex;
    justify-content: center;
    align-items: center;
    height: 72px;
    margin-top: 7px;
    padding-right: 8px;
    background-color: #f4f4f4;
    font-size: 46px;
    color: #777;
}
.tri-up {
    width: 0;
    height: 0;
    margin-left: 27px;
    border-bottom: 12px solid #777;
    border-left: 10px solid transparent;
    border-right: 10px solid transparent;
}
.ticks {
    height: 328px;
    overflow: hidden;
}
.tick {
    position: relative;
    display: flex;
    align-items: center;
    height: 71px;
    padding-left: 6px;
    font-size: 40px;
}
.tick-first { margin-top: -24px; }
.tick-t { width: 138px; color: #555; }
.tick-p { width: 75px; color: #cf413b; }
.tick-v {
    flex: 1;
    padding-right: 3px;
    text-align: right;
}
.tick-wan { font-size: 37px; }
.tick-bar {
    position: absolute;
    right: 0;
    top: 2px;
    bottom: 3px;
    width: 13px;
    background-color: rgba(190, 165, 150, 0.42);
}

/* danmaku + vote */
.actions {
    display: flex;
    height: 92px;
    margin-top: 28px;
    padding-left: 40px;
}
.danmu {
    display: flex;
    width: 662px;
    border: 1px solid #eee;
    border-radius: 46px;
    overflow: hidden;
}
.danmu-icon {
    position: relative;
    width: 134px;
    padding-left: 37px;
    font-size: 44px;
    font-weight: 700;
    line-height: 82px;
    color: #555;
}
.danmu-check {
    position: absolute;
    left: 72px;
    top: 47px;
    width: 20px;
    height: 22px;
}
.danmu-input {
    display: flex;
    align-items: center;
    justify-content: space-between;
    flex: 1;
    padding: 0 23px 0 40px;
    background-color: #f5f5f5;
    font-size: 43px;
    color: #999;
}
.gift { width: 54px; height: 58px; margin-top: 8px; }
.vote {
    display: flex;
    width: 418px;
    height: 92px;
    margin-left: 40px;
    font-size: 38px;
    line-height: 90px;
    white-space: nowrap;
}
.vote-up {
    width: 212px;
    padding-left: 21px;
    border-radius: 46px 0 0 46px;
    background: linear-gradient(#fcebe8, #f7d8d4);
    color: #d9534f;
    clip-path: polygon(0 0, 100% 0, 96% 100%, 0 100%);
}
.vote-down {
    flex: 1;
    margin-left: -5px;
    padding-left: 28px;
    border-radius: 0 46px 46px 0;
    background: linear-gradient(#e0f8e6, #b9edc7);
    color: #46a857;
    clip-path: polygon(4% 0, 100% 0, 100% 100%, 0 100%);
}
.banner {
    display: flex;
    align-items: center;
    justify-content: space-between;
    height: 118px;
    margin: 23px 16px 0;
    padding: 0 44px 0 47px;
    border-radius: 20px;
    background-color: #dce7fa;
    font-size: 46px;
    letter-spacing: 0.4px;
    color: #5b8ddb;
}
.banner-close { width: 30px; height: 32px; }
.band-bottom { margin-top: 26px; }

/* footer */
.footer {
    display: grid;
    grid-template-columns: 276px 232px 230px 232px 230px;
    height: 167px;
    margin-top: 7px;
    background-color: #272727;
    color: #ccc;
    font-size: 38px;
}
.foot-item {
    position: relative;
    display: flex;
    flex-direction: column;
    align-items: center;
    padding-top: 25px;
}
.foot-icon {
    width: 60px;
    height: 60px;
    margin-bottom: 4px;
}
.foot-stock { padding-top: 13px; }
.tri-foot {
    width: 0;
    height: 0;
    border-bottom: 16px solid #bbb;
    border-left: 15px solid transparent;
    border-right: 15px solid transparent;
}
.foot-sector {
    margin-top: 16px;
    color: #a49a90;
    line-height: 46px;
}
.foot-chg {
    margin-top: 21px;
    font-size: 44px;
    line-height: 46px;
    color: #6ee03c;
}
.foot-dot {
    position: absolute;
    left: 145px;
    top: 25px;
    width: 21px;
    height: 21px;
    border-radius: 50%;
    background-color: #d8403a;
}
```

FILE: charts.js
```js
// bars of the lower charts, coordinates are in the svg's viewBox units
var RED = '#d9453d';
var GREEN = '#54a02f';
var THIN_RED = '#d8544d';
var THIN_GREEN = '#5da53c';
var seed = 7;

function rnd() {
    seed = (seed * 16807) % 2147483647;
    return seed / 2147483647;
}

function lerp(pts, x) {
    for (var i = 1; i < pts.length; i++) {
        if (x <= pts[i][0]) {
            var a = pts[i - 1], b = pts[i];
            return a[1] + (b[1] - a[1]) * (x - a[0]) / (b[0] - a[0]);
        }
    }
    return pts[pts.length - 1][1];
}

function addBar(group, x, w, y1, y2, color) {
    var r = document.createElementNS('http://www.w3.org/2000/svg', 'rect');
    r.setAttribute('x', x);
    r.setAttribute('width', w);
    r.setAttribute('y', Math.min(y1, y2));
    r.setAttribute('height', Math.abs(y2 - y1));
    r.setAttribute('fill', color);
    group.appendChild(r);
}

// auction volume: [x from, x to, y at start, y at end, colour]
var hanging = [
    [24, 30, 455, 455, RED], [30, 52, 120, 130, GREEN], [52, 66, 380, 640, GREEN],
    [66, 84, 130, 220, GREEN], [84, 118, 130, 60, GREEN], [120, 175, 250, 230, RED],
    [175, 260, 60, 70, GREEN], [250, 272, 70, 90, RED], [272, 314, 55, 60, GREEN],
    [314, 322, 95, 95, RED], [322, 350, 55, 75, RED],
    [1442, 1470, 90, 60, GREEN], [1470, 1510, 70, 170, GREEN], [1510, 1532, 110, 50, GREEN],
    [1532, 1548, 130, 130, RED], [1548, 1555, 400, 400, RED]
];
var rising = [
    [30, 55, 705, 715, GREEN], [55, 80, 890, 920, GREEN], [80, 100, 975, 1100, GREEN],
    [100, 120, 1100, 1310, GREEN], [120, 180, 1325, 1310, RED], [180, 215, 1390, 1420, GREEN],
    [215, 300, 1390, 1200, RED], [300, 338, 1180, 1000, RED], [338, 350, 950, 760, RED],
    [1445, 1460, 1480, 1335, RED], [1460, 1530, 1400, 740, GREEN], [1530, 1555, 740, 650, RED]
];
var auction = document.getElementById('auction');
hanging.forEach(function (s) {
    for (var x = s[0]; x < s[1]; x += 4) {
        addBar(auction, x, 4.2, 41, s[2] + (s[3] - s[2]) * (x - s[0]) / (s[1] - s[0]), s[4]);
    }
});
rising.forEach(function (s) {
    for (var x = s[0]; x < s[1]; x += 4) {
        addBar(auction, x, 4.2, 1537, s[2] + (s[3] - s[2]) * (x - s[0]) / (s[1] - s[0]), s[4]);
    }
});

// traded volume: a rough envelope with the tall ticks put on top
var volEnvelope = [[362, 530], [380, 610], [400, 660], [470, 700], [560, 725], [640, 735], [660, 680], [690, 600], [720, 690], [760, 730], [800, 680], [840, 640], [880, 690], [910, 735], [1000, 738], [1250, 742], [1270, 722], [1350, 718], [1400, 660], [1430, 620]];
var spikes = { 366: 40, 370: 390, 388: 380, 463: 320, 523: 610, 549: 660, 668: 570, 679: 435, 687: 510, 694: 570, 705: 620, 798: 570, 817: 460, 832: 630, 843: 560, 855: 650, 1085: 710, 1105: 700, 1262: 695, 1415: 550 };
var spikeKeys = Object.keys(spikes).map(Number);
var volume = document.getElementById('volume');
for (var vx = 362; vx < 1425; vx += 3.73) {
    var volTop = lerp(volEnvelope, vx);
    volTop = 750 - (750 - volTop) * (0.35 + rnd() * 0.75);
    spikeKeys.forEach(function (k) {
        if (Math.abs(k - vx) < 1.9) volTop = spikes[k];
    });
    addBar(volume, vx, 2.4, 750, volTop, rnd() > 0.5 ? THIN_RED : THIN_GREEN);
}
addBar(volume, 1430, 2, 750, 520, '#888');

// macd histogram, y values around the zero line at 1298
var macdParts = [
    [GREEN, [[365, 1300], [375, 1340], [390, 1380], [400, 1440], [412, 1440], [424, 1300]]],
    [RED, [[426, 1290], [432, 1292]]],
    [GREEN, [[436, 1305], [460, 1365], [470, 1330], [488, 1300]]],
    [RED, [[490, 1280], [495, 1250], [520, 1190], [545, 1150], [555, 1150], [575, 1270]]],
    [GREEN, [[580, 1302], [600, 1320], [625, 1370], [632, 1310]]],
    [RED, [[636, 1298], [660, 1220], [680, 1080], [700, 1100], [715, 1260]]],
    [GREEN, [[718, 1310], [740, 1370], [765, 1520], [780, 1400], [795, 1320]]],
    [RED, [[798, 1250], [830, 1100], [850, 1050], [870, 1290]]],
    [GREEN, [[874, 1310], [880, 1350], [910, 1530], [940, 1400], [960, 1310]]],
    [RED, [[965, 1290], [970, 1255], [985, 1285], [1010, 1295]]],
    [GREEN, [[1015, 1305], [1040, 1400], [1060, 1320], [1090, 1380], [1130, 1350], [1142, 1305]]],
    [RED, [[1150, 1298], [1170, 1210], [1190, 1270], [1230, 1260], [1270, 1170], [1290, 1230], [1315, 1296]]],
    [GREEN, [[1318, 1310], [1340, 1460], [1360, 1340], [1390, 1305], [1410, 1360], [1430, 1430]]]
];
var macd = document.getElementById('macd');
macdParts.forEach(function (part) {
    var pts = part[1];
    for (var x = pts[0][0]; x <= pts[pts.length - 1][0]; x += 3.73) {
        addBar(macd, x, 2.4, 1298, lerp(pts, x), part[0] === RED ? THIN_RED : THIN_GREEN);
    }
});
```
